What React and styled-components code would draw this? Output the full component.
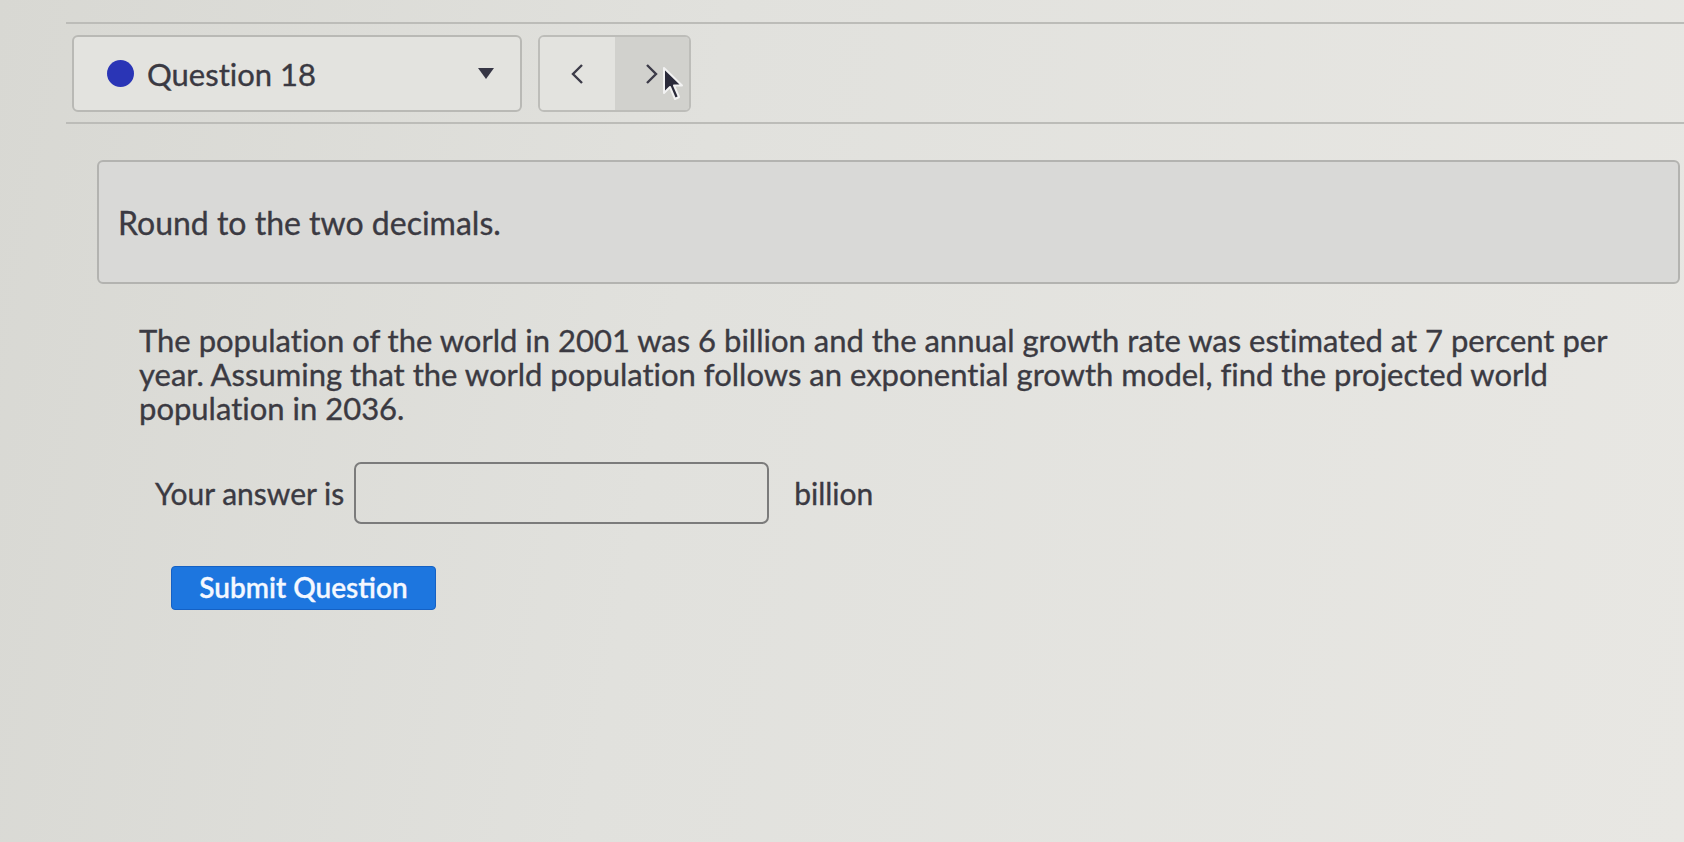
import React from 'react';
import styled, { createGlobalStyle } from 'styled-components';

const GlobalStyle = createGlobalStyle`
  html, body {
    margin: 0;
    padding: 0;
  }
  body {
    min-height: 842px;
    background: linear-gradient(100deg, #d8d8d3 0%, #e1e1dd 40%, #e8e7e3 100%);
    font-family: Lato, "Open Sans", sans-serif;
    font-variant-ligatures: none;
    color: #3b3a42;
    -webkit-text-stroke: 0.35px #3b3a42;
    overflow: hidden;
  }
`;

const Page = styled.div`
  width: 1684px;
  height: 842px;
  padding-top: 22px;
  box-sizing: border-box;
`;

const Toolbar = styled.div`
  margin-left: 66px;
  border-top: 2px solid #bcbcb8;
  border-bottom: 2px solid #bcbcb8;
  padding: 11px 0 10px 6px;
  display: flex;
  align-items: center;
  gap: 16px;
`;

const Select = styled.div`
  width: 450px;
  height: 77px;
  box-sizing: border-box;
  border: 2px solid #b9b9b5;
  border-radius: 6px;
  background: #e3e3df;
  display: flex;
  align-items: center;
  padding: 0 26px 0 33px;
`;

const Dot = styled.span`
  width: 27px;
  height: 27px;
  border-radius: 50%;
  background: #2a35b6;
  flex: none;
`;

const SelectLabel = styled.span`
  margin-left: 13px;
  font-size: 31px;
  flex: 1;
  color: #3a3942;
`;

const Caret = styled.span`
  width: 0;
  height: 0;
  border-left: 8px solid transparent;
  border-right: 8px solid transparent;
  border-top: 11px solid #363645;
`;

const NavGroup = styled.div`
  display: flex;
  width: 153px;
  height: 77px;
  box-sizing: border-box;
  border: 2px solid #bdbdb9;
  border-radius: 6px;
`;

const NavButton = styled.button`
  position: relative;
  flex: 1;
  border: none;
  padding: 0;
  margin: 0;
  background: ${(p) => (p.hover ? '#d1d1cd' : '#e3e3df')};
  border-radius: ${(p) => (p.side === 'left' ? '4px 0 0 4px' : '0 4px 4px 0')};
  display: flex;
  align-items: center;
  justify-content: center;
  cursor: pointer;
`;

const Cursor = styled.svg`
  position: absolute;
  left: 47px;
  top: 29px;
`;

const Panel = styled.div`
  margin: 36px 4px 0 97px;
  height: 124px;
  box-sizing: border-box;
  border: 2px solid #b3b3b0;
  border-radius: 6px;
  background: #d9d9d7;
  display: flex;
  align-items: center;
  padding: 0 0 0 19px;
  font-size: 32px;
`;

const Question = styled.p`
  margin: 39px 0 0 139px;
  width: 1500px;
  font-size: 31px;
  line-height: 34px;
`;

const AnswerRow = styled.div`
  margin: 37px 0 0 155px;
  display: flex;
  align-items: center;
  font-size: 30px;
`;

const AnswerInput = styled.input`
  margin: 0 25px 0 10px;
  width: 415px;
  height: 62px;
  box-sizing: border-box;
  border: 2px solid #7b7b7b;
  border-radius: 7px;
  background: transparent;
  font: inherit;
  outline: none;
`;

const SubmitButton = styled.button`
  margin: 42px 0 0 171px;
  width: 265px;
  height: 44px;
  border: 1px solid #1561c4;
  border-radius: 4px;
  background: #1d76df;
  color: #f4f8ff;
  -webkit-text-stroke: 0.3px #f4f8ff;
  font-family: Lato, "Open Sans", sans-serif;
  font-size: 28px;
  font-weight: 600;
  padding: 0 0 2px;
  cursor: pointer;
`;

function Chevron({ dir }) {
  const pts = dir === 'left' ? '11,2 2,11 11,20' : '2,2 11,11 2,20';
  return (
    <svg width="13" height="22" viewBox="0 0 13 22">
      <polyline points={pts} fill="none" stroke="#3c3b48" strokeWidth="2.4" />
    </svg>
  );
}

export default function App() {
  return (
    <>
      <GlobalStyle />
      <Page>
        <Toolbar>
          <Select>
            <Dot />
            <SelectLabel>Question 18</SelectLabel>
            <Caret />
          </Select>
          <NavGroup>
            <NavButton side="left" aria-label="Previous">
              <Chevron dir="left" />
            </NavButton>
            <NavButton side="right" hover aria-label="Next">
              <Chevron dir="right" />
              <Cursor width="24" height="36" viewBox="0 0 24 36">
                <path
                  d="M2 2 L2 27 L8 21 L13 33 L17 31 L12 19.5 L20 19.5 Z"
                  fill="#2a2a3a"
                  stroke="#f2f2f2"
                  strokeWidth="2"
                  strokeLinejoin="round"
                />
              </Cursor>
            </NavButton>
          </NavGroup>
        </Toolbar>

        <Panel>Round to the two decimals.</Panel>

        <Question>
          The population of the world in 2001 was 6 billion and the annual growth rate was
          estimated at 7 percent per year. Assuming that the world population follows an
          exponential growth model, find the projected world population in 2036.
        </Question>

        <AnswerRow>
          Your answer is
          <AnswerInput type="text" />
          billion
        </AnswerRow>

        <SubmitButton>Submit Question</SubmitButton>
      </Page>
    </>
  );
}
